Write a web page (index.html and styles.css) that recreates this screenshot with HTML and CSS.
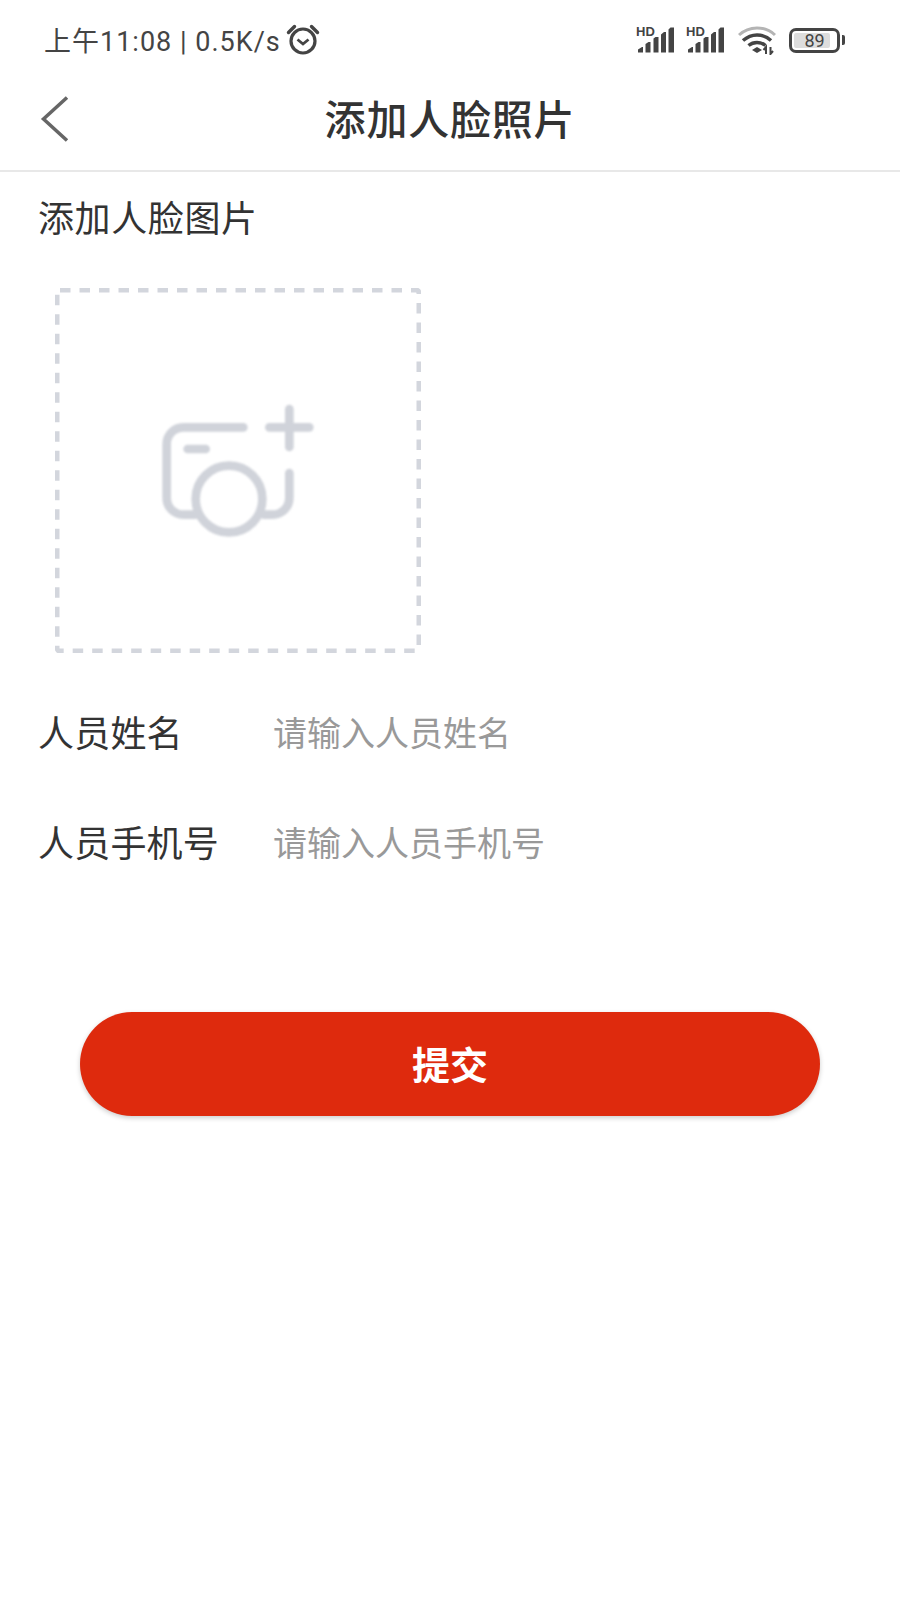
FILE: index.html
```html
<!DOCTYPE html>
<html lang="zh-CN">

<head>
    <meta charset="UTF-8">
    <meta name="viewport" content="width=device-width, initial-scale=1.0">
    <title>添加人脸照片</title>
    <link rel="stylesheet" href="styles.css">
</head>

<body>
    <div class="status">
        <span class="status-text">上午11:08 | 0.5K/s</span>
        <svg class="alarm" width="34" height="34" viewBox="0 0 34 34">
            <circle cx="17" cy="18" r="12" fill="none" stroke="#444" stroke-width="3.200" />
            <path d="M11.500 16.500l5.500 4.500 5.500-4.500" fill="none" stroke="#444" stroke-width="2.800" />
            <path d="M2.500 9.500l6-6M31.500 9.500l-6-6" stroke="#444" stroke-width="3.400" stroke-linecap="round" />
        </svg>
        <div class="status-icons">
            <svg class="signal" width="41" height="40" viewBox="0 -6 41 40">
                <text x="0" y="10" class="hd">HD</text>
                <path d="M2 26.500v-3l4-2.500h1v5.500zM9.500 26.500v-8.500l3-2h2v10.500zM17.500 26.500v-14l2-1.500h3v15.500zM25 26.500v-18l3-2.500h2v20.500zM32.500 26.500v-23l2-2h3.500v25z" fill="#444" />
            </svg>
            <svg class="signal" width="41" height="40" viewBox="0 -6 41 40">
                <text x="0" y="10" class="hd">HD</text>
                <path d="M2 26.500v-3l4-2.500h1v5.500zM9.500 26.500v-8.500l3-2h2v10.500zM17.500 26.500v-14l2-1.500h3v15.500zM25 26.500v-18l3-2.500h2v20.500zM32.500 26.500v-23l2-2h3.500v25z" fill="#444" />
            </svg>
            <svg class="wifi" width="38" height="30" viewBox="0 0 38 30">
                <path d="M1 10c10-9.500 26-9.500 36 0" fill="none" stroke="#b4b4b4" stroke-width="3" />
                <path d="M5 15.500c8.500-7.500 19.500-7.500 28 0M10.500 20.500c5-4 12-4 17 0" fill="none" stroke="#444" stroke-width="3.500" />
                <path d="M14 25l5-3 5 3-5 3z" fill="#444" />
                <path d="M28 29v-7l-2.500 3M32.500 22v7l2.500-3" fill="none" stroke="#444" stroke-width="2" />
            </svg>
            <div class="battery">
                <div class="battery-body"><span class="battery-level">89</span></div>
                <i class="battery-cap"></i>
            </div>
        </div>
    </div>

    <div class="header">
        <svg class="back" width="30" height="48" viewBox="0 0 30 48">
            <path d="M27 2.500L3.500 24 27 45.500" fill="none" stroke="#666" stroke-width="3.500" />
        </svg>
        <h1 class="title">添加人脸照片</h1>
    </div>

    <div class="section-title">添加人脸图片</div>

    <div class="upload">
        <svg class="upload-box" width="366" height="365" viewBox="0 0 366 365">
            <rect x="2" y="2" width="362" height="361" rx="3" fill="none" stroke="#d3d6dd" stroke-width="5" stroke-dasharray="10.500 9" />
        </svg>
        <svg class="camera" width="156" height="137" viewBox="360 400 468 411">
            <g fill="none" stroke="#d0d3da" stroke-width="26" stroke-linecap="round">
                <path d="M610 473H430a50 50 0 0 0-50 50V685a50 50 0 0 0 50 50H465" />
                <path d="M748 610V685a50 50 0 0 1-50 50H672" />
                <circle cx="567" cy="688" r="100" />
                <path d="M443 538H497" />
                <path d="M748 418V532M688 473H808" />
            </g>
        </svg>
    </div>

    <div class="field first">
        <span class="label">人员姓名</span>
        <span class="placeholder">请输入人员姓名</span>
    </div>
    <div class="field">
        <span class="label">人员手机号</span>
        <span class="placeholder">请输入人员手机号</span>
    </div>

    <button class="submit">提交</button>
</body>

</html>
```

FILE: styles.css
```css
* {
    padding: 0;
    margin: 0;
    box-sizing: border-box;
}

body {
    width: 900px;
    height: 1600px;
    background: #fff;
    color: #333;
    font-family: Roboto, "Noto Sans CJK SC", sans-serif;
    overflow: hidden;
}

/* 状态栏 */
.status {
    height: 80px;
    display: flex;
    align-items: center;
    padding: 0 55px 0 44px;
}

.status-text {
    padding-bottom: 2px;
    font-size: 27px;
    letter-spacing: 1px;
    color: #444;
}

.alarm {
    margin-left: 5px;
}

.status-icons {
    margin-left: auto;
    display: flex;
    align-items: center;
}

.signal {
    margin-right: 9px;
}

.hd {
    font-family: "Liberation Sans", sans-serif;
    font-size: 13px;
    font-weight: bold;
    fill: #444;
}

.wifi {
    margin: 0 13px 0 2px;
}

.battery {
    display: flex;
    align-items: center;
}

.battery-body {
    width: 51px;
    height: 25px;
    border: 3px solid #444;
    border-radius: 7px;
    padding: 2px 2px;
}

.battery-level {
    display: block;
    width: 36px;
    height: 15px;
    padding-left: 5px;
    background: #ddd;
    border-radius: 2px;
    font-size: 18px;
    line-height: 15px;
    text-align: center;
    color: #444;
}

.battery-cap {
    width: 3px;
    height: 10px;
    margin-left: 2px;
    background: #444;
    border-radius: 0 2px 2px 0;
}

/* 标题栏 */
.header {
    height: 92px;
    padding-bottom: 8px;
    display: flex;
    align-items: center;
    justify-content: center;
    position: relative;
    border-bottom: 2px solid #e8e8e8;
}

.back {
    position: absolute;
    left: 40px;
    top: 15px;
}

.title {
    font-size: 41px;
    font-weight: 500;
    letter-spacing: 0.8px;
    line-height: 78px;
    color: #333;
}

.section-title {
    margin: 24px 0 0 38px;
    font-size: 36px;
    letter-spacing: 0.6px;
    line-height: 48px;
}

.upload {
    position: relative;
    width: 366px;
    height: 365px;
    margin: 44px 0 0 55px;
    display: flex;
    align-items: center;
    justify-content: center;
}

.upload-box {
    position: absolute;
    left: 0;
    top: 0;
    filter: blur(0.7px);
}

.camera {
    position: relative;
    left: 0;
    top: 1px;
    filter: blur(0.8px);
}

/* 表单 */
.field {
    height: 110px;
    padding-left: 38px;
    display: flex;
    align-items: center;
}

.field.first {
    margin-top: 23px;
}

.label {
    width: 235px;
    font-size: 36px;
    letter-spacing: 0.2px;
}

.placeholder {
    font-size: 34px;
    color: #999;
}

.submit {
    display: block;
    width: 740px;
    height: 104px;
    margin: 116px 0 0 80px;
    padding-bottom: 4px;
    border: none;
    border-radius: 52px;
    background: #de2a0d;
    color: #fff;
    font-family: inherit;
    font-size: 38px;
    font-weight: bold;
    box-shadow: 0 2px 5px rgba(0, 0, 0, 0.2);
}
```
